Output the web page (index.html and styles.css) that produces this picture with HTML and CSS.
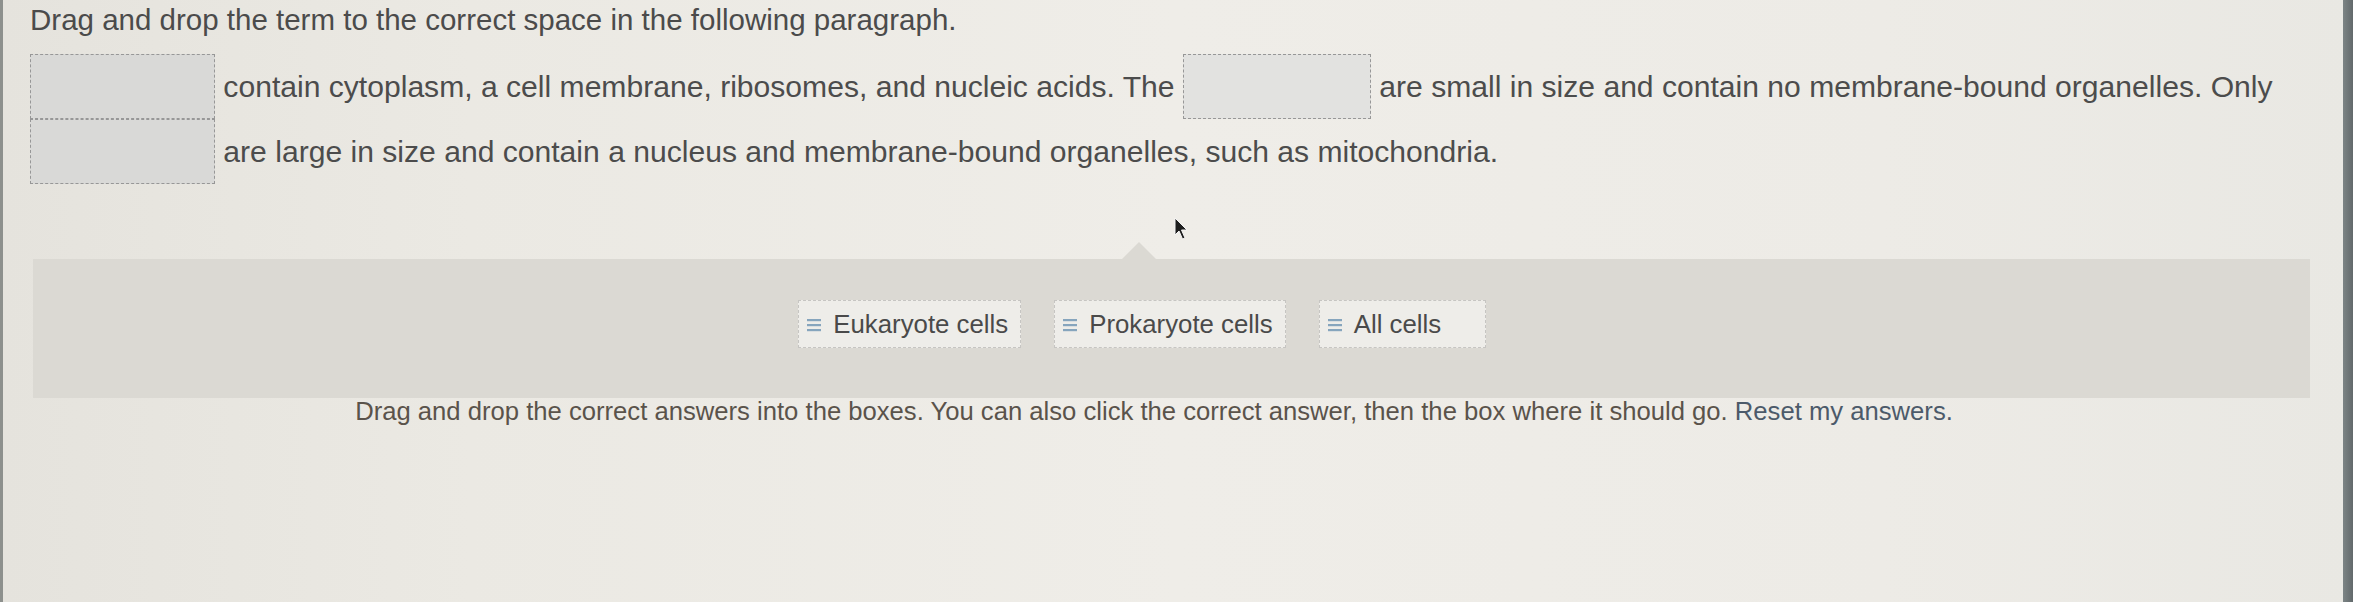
FILE: index.html
```html
<!DOCTYPE html>
<html lang="en">
<head>
<meta charset="utf-8">
<title>Drag and drop</title>
<link rel="stylesheet" href="styles.css">
</head>
<body>
<div class="screen">
  <div class="edge-left"></div>
  <main class="content">
    <h1 class="title">Drag and drop the term to the correct space in the following paragraph.</h1>
    <p class="para"><span class="drop"></span> contain cytoplasm, a cell membrane, ribosomes, and nucleic acids. The <span class="drop drop-light"></span> are small in size and contain no membrane-bound organelles. Only <span class="drop"></span> are large in size and contain a nucleus and membrane-bound organelles, such as mitochondria.</p>
    <div class="bank">
      <span class="notch"></span>
      <div class="chip"><svg class="grip" viewBox="0 0 14 14" width="14" height="14"><rect x="0" y="1" width="14" height="2.2"/><rect x="0" y="6" width="14" height="2.2"/><rect x="0" y="11" width="14" height="2.2"/></svg><span>Eukaryote cells</span></div>
      <div class="chip"><svg class="grip" viewBox="0 0 14 14" width="14" height="14"><rect x="0" y="1" width="14" height="2.2"/><rect x="0" y="6" width="14" height="2.2"/><rect x="0" y="11" width="14" height="2.2"/></svg><span>Prokaryote cells</span></div>
      <div class="chip"><svg class="grip" viewBox="0 0 14 14" width="14" height="14"><rect x="0" y="1" width="14" height="2.2"/><rect x="0" y="6" width="14" height="2.2"/><rect x="0" y="11" width="14" height="2.2"/></svg><span>All cells</span></div>
    </div>
    <p class="hint">Drag and drop the correct answers into the boxes. You can also click the correct answer, then the box where it should go. <a class="reset" href="#">Reset my answers.</a></p>
    <svg class="cursor" viewBox="0 0 14 24" width="14" height="24"><path d="M1 1 L1 18 L5 14 L8.5 22 L11 21 L7.5 13 L13 13 Z" fill="#1e1e1e" stroke="#f4f4f4" stroke-width="1"/></svg>
  </main>
  <div class="edge-right"></div>
</div>
</body>
</html>
```
FILE: styles.css
```css
html, body {
  margin: 0;
  padding: 0;
}
body {
  width: 2353px;
  height: 602px;
  overflow: hidden;
  font-family: "Liberation Sans", Arial, sans-serif;
  color: #4a4a4a;
}
.screen {
  display: flex;
  height: 602px;
  background: linear-gradient(90deg, #e5e3dd 0%, #ebe9e3 20%, #efede8 50%, #edebe6 80%, #e9e8e3 100%);
}
.edge-left {
  width: 3px;
  background: #8d908d;
}
.edge-right {
  width: 10px;
  background: linear-gradient(90deg, #7c8485, #62696b);
}
.content {
  position: relative;
  flex: 1;
  padding-left: 27px;
  padding-right: 33px;
}
.title {
  margin: 0;
  font-weight: normal;
  font-size: 29.5px;
  line-height: 40px;
  color: #4b4b4b;
}
.para {
  margin: 14px 0 0;
  font-size: 30.1px;
  line-height: 65px;
  color: #4c4c4c;
}
.drop {
  display: inline-block;
  box-sizing: border-box;
  width: 185px;
  height: 65px;
  vertical-align: top;
  border: 1.5px dashed #979797;
  background: #d9d9d7;
}
.drop-light {
  width: 188px;
  background: #e2e2e0;
}
.bank {
  position: relative;
  margin: 75px 0 0 3px;
  height: 139px;
  box-sizing: border-box;
  padding: 41px 59px 0 0;
  display: flex;
  justify-content: center;
  align-items: flex-start;
  gap: 33px;
  background: #dbd9d3;
}
.notch {
  position: absolute;
  top: -17px;
  left: 1089px;
  width: 0;
  height: 0;
  border-left: 17px solid transparent;
  border-right: 17px solid transparent;
  border-bottom: 17px solid #dbd9d3;
}
.chip {
  display: flex;
  align-items: center;
  gap: 12px;
  box-sizing: border-box;
  height: 48px;
  min-width: 167px;
  padding: 0 12px 0 8px;
  background: #eeede9;
  border: 1.5px dashed #c6c5c2;
  font-size: 25.8px;
  color: #4a4a4a;
}
.grip {
  flex: none;
  fill: #86a5bd;
  margin-top: 2px;
}
.hint {
  margin: 2px 0 0;
  padding-right: 32px;
  text-align: center;
  font-size: 25.65px;
  line-height: 22px;
  color: #5a534b;
}
.reset {
  color: #4c5a6a;
  text-decoration: none;
}
.cursor {
  position: absolute;
  left: 1171px;
  top: 217px;
}
```
